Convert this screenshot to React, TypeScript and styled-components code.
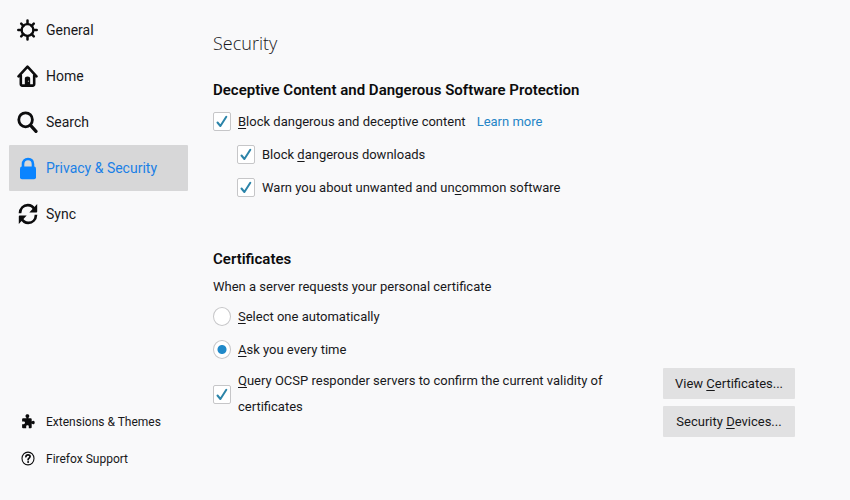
import React, { useId, useState } from 'react';
import styled, { createGlobalStyle, css } from 'styled-components';

const GlobalStyle = createGlobalStyle`
  *, *::before, *::after { box-sizing: border-box; }
  body {
    margin: 0;
    background: #f9f9fa;
    color: #18181a;
    font-family: Roboto, "Open Sans", sans-serif;
    font-size: 13px;
  }
  h1, h2, p { margin: 0; }
  button, input { font: inherit; color: inherit; }
`;

const Page = styled.div`
  display: flex;
  min-height: 100vh;
`;

const Sidebar = styled.aside`
  flex: 0 0 188px;
  display: flex;
  flex-direction: column;
  justify-content: space-between;
  padding: 7px 0 23px 9px;
`;

const NavList = styled.nav`
  display: flex;
  flex-direction: column;
`;

const NavItem = styled.button<{ $active: boolean }>`
  display: flex;
  align-items: center;
  gap: 8px;
  height: 46px;
  padding: 0 8px;
  border: 0;
  border-radius: 1px;
  text-align: left;
  font-size: 14px;
  cursor: pointer;
  background: ${(p) => (p.$active ? '#d7d7d8' : 'transparent')};
  color: ${(p) => (p.$active ? '#1a80e6' : '#18181a')};
`;

const IconSlot = styled.span<{ $accent?: boolean }>`
  flex: 0 0 21px;
  display: flex;
  justify-content: center;
  color: ${(p) => (p.$accent ? '#0a84ff' : '#0c0c0d')};
`;

const FooterLink = styled.a`
  display: flex;
  align-items: center;
  gap: 8px;
  height: 37px;
  padding: 0 8px;
  color: #18181a;
  font-size: 12px;
  text-decoration: none;
`;

const Main = styled.main`
  flex: 1;
  min-width: 0;
  padding: 28px 55px 40px 25px;
`;

const Title = styled.h1`
  margin-bottom: 20px;
  font-family: "Open Sans", sans-serif;
  font-size: 18px;
  font-weight: 300;
  line-height: 30px;
  color: #18181a;
`;

const Section = styled.section`
  & + & { margin-top: 43px; }
`;

const Heading = styled.h2`
  margin-bottom: 3px;
  font-size: 15px;
  font-weight: 600;
  line-height: 24px;
  color: #0c0c0d;
`;

const Description = styled.p`
  line-height: 26px;
`;

const OptionRow = styled.div<{ $indent?: boolean }>`
  display: flex;
  align-items: center;
  gap: 7px;
  min-height: 33px;
  padding-left: ${(p) => (p.$indent ? '24px' : '0')};
`;

const OptionLabel = styled.label`
  line-height: 26px;
`;

const AccessKey = styled.span`
  text-decoration: underline;
  text-decoration-thickness: 1px;
  text-underline-offset: 2px;
  text-decoration-skip-ink: none;
`;

const LearnMore = styled.a`
  margin-left: 4px;
  color: #2585c7;
  line-height: 26px;
  text-decoration: none;
`;

const ControlBox = styled.span`
  flex: none;
  display: grid;
  place-items: center;
  & > * { grid-area: 1 / 1; }
  svg { pointer-events: none; }
`;

const controlStyle = css`
  appearance: none;
  width: 18px;
  height: 19px;
  margin: 0;
  border: 1px solid #c6c6c8;
  background: #fff;
`;

const Checkbox = styled.input`
  ${controlStyle}
  border-radius: 2px;
`;

const Radio = styled.input`
  ${controlStyle}
  border-radius: 50%;
  &:checked {
    background: radial-gradient(circle, #2089c9 0 4px, #fff 5px);
  }
`;

const CertificateRow = styled.div`
  display: flex;
  align-items: flex-start;
  gap: 16px;
  margin-top: 2px;
`;

const OcspOption = styled(OptionRow)`
  flex: 1;
`;

const ButtonColumn = styled.div`
  flex: 0 0 132px;
  display: flex;
  flex-direction: column;
  gap: 7px;
`;

const ActionButton = styled.button`
  height: 31px;
  padding: 0 8px;
  border: 0;
  border-radius: 1px;
  background: #e1e1e2;
  white-space: nowrap;
  cursor: pointer;
`;

const GearIcon = () => (
  <svg width="21" height="22" viewBox="0 0 21 22" fill="none" stroke="currentColor" strokeLinecap="round">
    <circle cx="10.5" cy="11" r="5.9" strokeWidth="2.3" />
    <path
      strokeWidth="2.5"
      d="M10.5 1.6v3.2M10.5 17.2v3.2M1.3 11h3.2M16.5 11h3.2M4.2 4.6l2.2 2.2M14.6 15.2l2.2 2.2M4.2 17.4l2.2-2.2M14.6 6.8l2.2-2.2"
    />
  </svg>
);

const HomeIcon = () => (
  <svg width="21" height="24" viewBox="0 0 22 24" fill="none" stroke="currentColor" strokeLinecap="round" strokeLinejoin="round">
    <path strokeWidth="2.7" d="M1.6 12.4 11 2.2l9.4 10.2M4 11.5v9q0 1.6 1.6 1.6h10.8q1.6 0 1.6-1.6v-9" />
    <path fill="currentColor" stroke="none" d="M8.2 22v-7q0-2.5 2.8-2.5t2.8 2.5v7z" />
    <circle cx="12" cy="17.5" r=".7" fill="#aaa" stroke="none" />
  </svg>
);

const SearchIcon = () => (
  <svg width="21" height="23" viewBox="0 0 21 23" fill="none" stroke="currentColor" strokeLinecap="round">
    <ellipse cx="8.6" cy="8.8" rx="6.8" ry="7" strokeWidth="2.8" />
    <path strokeWidth="3.2" d="m13.6 14.4 5.4 6" />
  </svg>
);

const LockIcon = () => (
  <svg width="18" height="23" viewBox="0 0 18 23">
    <path d="M4 11V7.2C4 3.9 6 2 9 2s5 1.9 5 5.2V11" fill="none" stroke="currentColor" strokeWidth="2.6" />
    <rect x="1" y="9.6" width="16" height="12.6" rx="2" fill="currentColor" />
  </svg>
);

const SyncIcon = () => (
  <svg width="20" height="22" viewBox="0 0 20 22" fill="none" stroke="currentColor" strokeWidth="2.7">
    <path d="M2 10.3C2.2 5.2 5.5 2.2 9.8 2.2c3 0 5.3 1.6 6.6 4.2" />
    <path d="M18 11.7c-.2 5.1-3.5 8.1-7.8 8.1-3 0-5.300-1.6-6.600-4.2" />
    <path fill="currentColor" stroke="none" d="M19.2 1v7.6q0 .9-.9.9h-7zM.8 21v-7.6q0-.9.9-.9h7z" />
  </svg>
);

const PuzzleIcon = () => (
  <svg width="14" height="15" viewBox="0 0 14 15" fill="currentColor">
    <path d="M4 4.2h1.6C5 3.5 4.5 3 4.5 2.1 4.5.9 5.3.3 6.4.3s1.9.6 1.9 1.8c0 .9-.5 1.4-1 2.1h2.4q1 0 1 1v2.4c.6-.5 1-.8 1.6-.8.9 0 1.4.7 1.4 1.7s-.5 1.8-1.4 1.8c-.6 0-1-.3-1.6-.8v3.7q0 1-1 1H7.8v-1.6c0-.8-.5-1.3-1.3-1.3s-1.3.5-1.3 1.3v1.6H2.1q-1 0-1-1v-3h1.4c.9 0 1.5-.5 1.5-1.4S3.4 7.500 2.500 7.500H1.100V5.200q0-1 1-1z" />
  </svg>
);

const HelpIcon = () => (
  <svg width="14" height="15" viewBox="0 0 14 15" fill="none" stroke="currentColor">
    <ellipse cx="7" cy="7.5" rx="6" ry="6.4" strokeWidth="1.1" />
    <path strokeWidth="1.7" strokeLinecap="round" d="M4.9 5.700C5 4.300 5.800 3.800 7 3.800s2.100.7 2.100 1.800c0 1.500-2 1.500-2 3.100" />
    <circle cx="7.1" cy="11.1" r="1" fill="currentColor" stroke="none" />
  </svg>
);

const CheckMark = () => (
  <svg width="12" height="13" viewBox="0 0 12 13" fill="none" stroke="#2b84a9" strokeWidth="2" strokeLinecap="round" strokeLinejoin="round">
    <path d="m1.5 7.500 2.900 3.500L10.300 1.800" />
  </svg>
);

type Option = { children: React.ReactNode; indent?: boolean; extra?: React.ReactNode };

function CheckOption({ children, indent, extra, as: Row = OptionRow }: Option & { as?: typeof OptionRow | typeof OcspOption }) {
  const id = useId();
  const [checked, setChecked] = useState(true);
  return (
    <Row $indent={indent}>
      <ControlBox>
        <Checkbox id={id} type="checkbox" checked={checked} onChange={(e) => setChecked(e.target.checked)} />
        {checked && <CheckMark />}
      </ControlBox>
      <OptionLabel htmlFor={id}>{children}</OptionLabel>
      {extra}
    </Row>
  );
}

function RadioOption({ children, defaultChecked }: { children: React.ReactNode; defaultChecked?: boolean }) {
  const id = useId();
  return (
    <OptionRow>
      <ControlBox>
        <Radio id={id} type="radio" name="certificate-choice" defaultChecked={defaultChecked} />
      </ControlBox>
      <OptionLabel htmlFor={id}>{children}</OptionLabel>
    </OptionRow>
  );
}

const categories = [
  { name: 'General', Icon: GearIcon },
  { name: 'Home', Icon: HomeIcon },
  { name: 'Search', Icon: SearchIcon },
  { name: 'Privacy & Security', Icon: LockIcon },
  { name: 'Sync', Icon: SyncIcon },
];

export default function App() {
  const [active, setActive] = useState('Privacy & Security');
  return (
    <>
      <GlobalStyle />
      <Page>
        <Sidebar>
          <NavList>
            {categories.map(({ name, Icon }) => (
              <NavItem key={name} $active={name === active} onClick={() => setActive(name)}>
                <IconSlot $accent={name === active}><Icon /></IconSlot>
                {name}
              </NavItem>
            ))}
          </NavList>
          <NavList>
            <FooterLink href="#extensions"><IconSlot><PuzzleIcon /></IconSlot>Extensions &amp; Themes</FooterLink>
            <FooterLink href="#support"><IconSlot><HelpIcon /></IconSlot>Firefox Support</FooterLink>
          </NavList>
        </Sidebar>
        <Main>
          <Title>Security</Title>
          <Section>
            <Heading>Deceptive Content and Dangerous Software Protection</Heading>
            <CheckOption extra={<LearnMore href="#learn-more">Learn more</LearnMore>}>
              <AccessKey>B</AccessKey>lock dangerous and deceptive content
            </CheckOption>
            <CheckOption indent>Block <AccessKey>d</AccessKey>angerous downloads</CheckOption>
            <CheckOption indent>Warn you about unwanted and un<AccessKey>c</AccessKey>ommon software</CheckOption>
          </Section>
          <Section>
            <Heading>Certificates</Heading>
            <Description>When a server requests your personal certificate</Description>
            <RadioOption><AccessKey>S</AccessKey>elect one automatically</RadioOption>
            <RadioOption defaultChecked><AccessKey>A</AccessKey>sk you every time</RadioOption>
            <CertificateRow>
              <CheckOption as={OcspOption}>
                <AccessKey>Q</AccessKey>uery OCSP responder servers to confirm the current validity of certificates
              </CheckOption>
              <ButtonColumn>
                <ActionButton>View <AccessKey>C</AccessKey>ertificates...</ActionButton>
                <ActionButton>Security <AccessKey>D</AccessKey>evices...</ActionButton>
              </ButtonColumn>
            </CertificateRow>
          </Section>
        </Main>
      </Page>
    </>
  );
}
